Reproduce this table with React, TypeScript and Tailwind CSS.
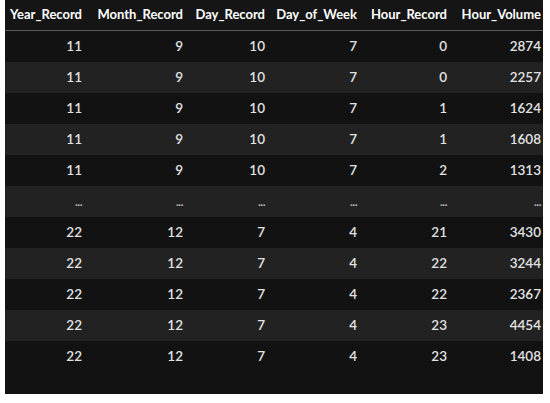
import React from "react";

const headers = ["Year_Record", "Month_Record", "Day_Record", "Day_of_Week", "Hour_Record", "Hour_Volume"];
const widths = ["w-[79px]", "w-[101px]", "w-[82px]", "w-[92px]", "w-[90px]", "w-[94px]"];
const rows: string[][] = [
  ["11", "9", "10", "7", "0", "2874"],
  ["11", "9", "10", "7", "0", "2257"],
  ["11", "9", "10", "7", "1", "1624"],
  ["11", "9", "10", "7", "1", "1608"],
  ["11", "9", "10", "7", "2", "1313"],
  ["...", "...", "...", "...", "...", "..."],
  ["22", "12", "7", "4", "21", "3430"],
  ["22", "12", "7", "4", "22", "3244"],
  ["22", "12", "7", "4", "22", "2367"],
  ["22", "12", "7", "4", "23", "4454"],
  ["22", "12", "7", "4", "23", "1408"],
];

export default function App() {
  return (
    <div className="w-[550px] h-[403px] bg-white pl-[5px]" style={{ fontFamily: "Lato, 'Open Sans', sans-serif" }}>
      <div className="w-[538px] h-[394px] bg-[#121212] flex flex-col">
        <div className="flex h-[30px] items-center bg-[#151515] border-b border-[#5a5a5a] box-content">
          {headers.map((h, i) => (
            <div key={h} className={`${widths[i]} pr-[2px] text-right text-[13px] font-bold text-white`}>
              {h}
            </div>
          ))}
        </div>
        {rows.map((r, ri) => (
          <div key={ri} className={`flex h-[31px] items-center ${ri % 2 === 1 ? "bg-[#222222]" : "bg-[#121212]"}`}>
            {r.map((c, ci) => (
              <div key={ci} className={`${widths[ci]} pr-[2px] text-right text-[13.5px] font-semibold text-[#e2e2e2]`}>
                {c === "..." ? <span className="text-[12px] font-bold text-[#b5b5b5] tracking-[-0.5px]">...</span> : c}
              </div>
            ))}
          </div>
        ))}
      </div>
    </div>
  );
}
